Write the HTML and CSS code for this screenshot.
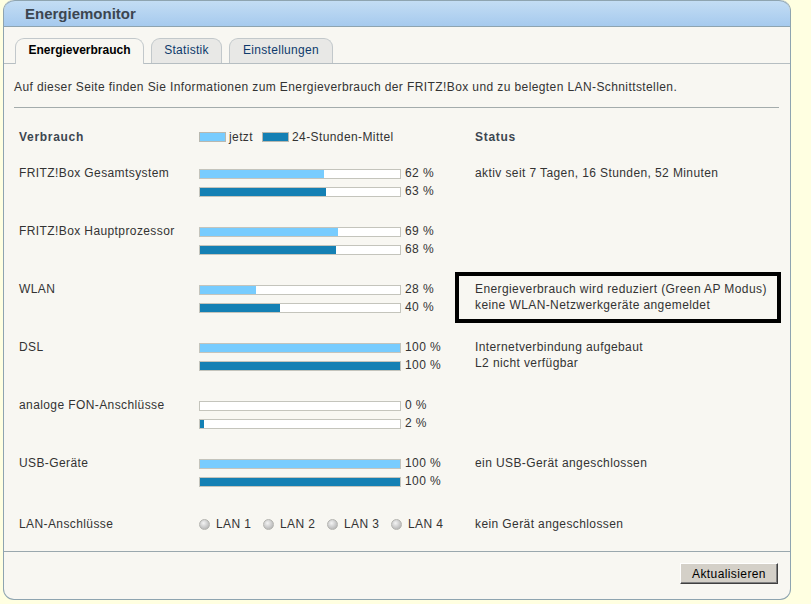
FILE: index.html
```html
<!DOCTYPE html>
<html lang="de">
<head>
<meta charset="utf-8">
<title>Energiemonitor</title>
<link rel="stylesheet" href="styles.css">
</head>
<body>
<div class="panel">
  <div class="head">Energiemonitor</div>
  <div class="tabs">
    <div class="tab t1 active">Energieverbrauch</div>
    <div class="tab t2">Statistik</div>
    <div class="tab t3">Einstellungen</div>
  </div>
  <div class="content">
    <p class="intro">Auf dieser Seite finden Sie Informationen zum Energieverbrauch der FRITZ!Box und zu belegten LAN-Schnittstellen.</p>
    <div class="rule"></div>
    <div class="table">
      <div class="row thead">
        <div class="label bold">Verbrauch</div>
        <div class="legend">
          <span class="swatch now"></span><span class="ltext">jetzt</span>
          <span class="swatch avg"></span><span class="ltext">24-Stunden-Mittel</span>
        </div>
        <div class="status bold">Status</div>
      </div>

      <div class="row">
        <div class="label">FRITZ!Box Gesamtsystem</div>
        <div class="bars">
          <div class="bline"><div class="bar"><div class="fill now" style="width:62%"></div></div><span class="pct">62 %</span></div>
          <div class="bline"><div class="bar"><div class="fill avg" style="width:63%"></div></div><span class="pct">63 %</span></div>
        </div>
        <div class="status">aktiv seit 7 Tagen, 16 Stunden, 52 Minuten</div>
      </div>

      <div class="row">
        <div class="label">FRITZ!Box Hauptprozessor</div>
        <div class="bars">
          <div class="bline"><div class="bar"><div class="fill now" style="width:69%"></div></div><span class="pct">69 %</span></div>
          <div class="bline"><div class="bar"><div class="fill avg" style="width:68%"></div></div><span class="pct">68 %</span></div>
        </div>
        <div class="status"></div>
      </div>

      <div class="row">
        <div class="label">WLAN</div>
        <div class="bars">
          <div class="bline"><div class="bar"><div class="fill now" style="width:28%"></div></div><span class="pct">28 %</span></div>
          <div class="bline"><div class="bar"><div class="fill avg" style="width:40%"></div></div><span class="pct">40 %</span></div>
        </div>
        <div class="status boxed">Energieverbrauch wird reduziert (Green AP Modus)<br>keine WLAN-Netzwerkgeräte angemeldet</div>
      </div>

      <div class="row">
        <div class="label">DSL</div>
        <div class="bars">
          <div class="bline"><div class="bar"><div class="fill now" style="width:100%"></div></div><span class="pct">100 %</span></div>
          <div class="bline"><div class="bar"><div class="fill avg" style="width:100%"></div></div><span class="pct">100 %</span></div>
        </div>
        <div class="status">Internetverbindung aufgebaut<br>L2 nicht verfügbar</div>
      </div>

      <div class="row">
        <div class="label">analoge FON-Anschlüsse</div>
        <div class="bars">
          <div class="bline"><div class="bar"><div class="fill now" style="width:0%"></div></div><span class="pct">0 %</span></div>
          <div class="bline"><div class="bar"><div class="fill avg" style="width:2%"></div></div><span class="pct">2 %</span></div>
        </div>
        <div class="status"></div>
      </div>

      <div class="row">
        <div class="label">USB-Geräte</div>
        <div class="bars">
          <div class="bline"><div class="bar"><div class="fill now" style="width:100%"></div></div><span class="pct">100 %</span></div>
          <div class="bline"><div class="bar"><div class="fill avg" style="width:100%"></div></div><span class="pct">100 %</span></div>
        </div>
        <div class="status">ein USB-Gerät angeschlossen</div>
      </div>

      <div class="row lanrow">
        <div class="label">LAN-Anschlüsse</div>
        <div class="lans">
          <span class="lan"><span class="led"></span>LAN 1</span>
          <span class="lan"><span class="led"></span>LAN 2</span>
          <span class="lan"><span class="led"></span>LAN 3</span>
          <span class="lan"><span class="led"></span>LAN 4</span>
        </div>
        <div class="status">kein Gerät angeschlossen</div>
      </div>
    </div>
  </div>
  <div class="foot">
    <button class="btn" type="button">Aktualisieren</button>
  </div>
</div>
</body>
</html>
```

FILE: styles.css
```css
html, body {
  margin: 0;
  padding: 0;
}
body {
  background: #ffffe1;
  font-family: "Liberation Sans", Arial, sans-serif;
  font-size: 12px;
  letter-spacing: 0.4px;
  color: #333;
  width: 811px;
  height: 604px;
  overflow: hidden;
}
.panel {
  margin-left: 3px;
  width: 788px;
  height: 600px;
  box-sizing: border-box;
  border: 1px solid #8ea4b0;
  border-top: none;
  border-radius: 11px;
  background: #f8f7f2;
  overflow: hidden;
  display: flex;
  flex-direction: column;
}
.head {
  height: 27px;
  box-sizing: border-box;
  border-top: 1px solid #8ea4b0;
  border-bottom: 1px solid #8ea4b0;
  border-radius: 11px 11px 0 0;
  background: linear-gradient(#c3ddf4, #a6caee);
  font-size: 15px;
  font-weight: bold;
  letter-spacing: 0;
  color: #3c4650;
  padding: 5px 0 0 21px;
  line-height: 16px;
}
.tabs {
  display: flex;
  gap: 7px;
  padding: 11px 0 0 11px;
  border-bottom: 1px solid #b6bec2;
  height: 25px;
}
.tab {
  height: 25px;
  box-sizing: border-box;
  line-height: 23px;
  text-align: center;
  border: 1px solid #c2c8cb;
  border-bottom: none;
  border-radius: 9px 9px 0 0;
  background: #e8e8e6;
  color: #0e3a6c;
  letter-spacing: 0.3px;
}
.t1 { width: 129px; }
.t2 { width: 71px; }
.t3 { width: 104px; }
.tab.active {
  background: #f8f7f2;
  color: #000;
  font-weight: bold;
  letter-spacing: 0;
  height: 26px;
  margin-bottom: -1px;
}
.content {
  padding: 0 10px;
}
.intro {
  margin: 15px 0 0 0;
  line-height: 16px;
}
.rule {
  margin-top: 12px;
  height: 1px;
  background: #a4acac;
  margin-right: 1px;
}
.table {
  margin-top: 21px;
  padding-left: 5px;
  display: flex;
  flex-direction: column;
  gap: 24px;
}
.row {
  display: grid;
  grid-template-columns: 180px 276px 1fr;
  align-items: start;
  line-height: 16px;
}
.thead {
  margin-bottom: -4px;
}
.bold {
  font-weight: bold;
  color: #3c4650;
  letter-spacing: 0.7px;
}
.legend {
  display: flex;
  align-items: center;
  height: 16px;
}
.swatch {
  width: 27px;
  height: 10px;
  box-sizing: border-box;
  border: 1px solid #b8b8b0;
}
.swatch.now { background: #78ccfe; }
.swatch.avg { background: #1480b4; }
.ltext {
  margin: 0 9px 0 3px;
}
.bars {
  display: flex;
  flex-direction: column;
  gap: 2px;
}
.bline {
  display: flex;
  align-items: center;
  height: 16px;
}
.bar {
  width: 202px;
  height: 10px;
  box-sizing: border-box;
  border: 1px solid #c4c4bc;
  background: #fff;
  margin-top: 1px;
}
.fill {
  height: 100%;
}
.fill.now { background: #78ccfe; }
.fill.avg { background: #1480b4; }
.pct {
  margin-left: 4px;
}
.status {
  position: relative;
}
.boxed::after {
  content: "";
  position: absolute;
  left: -20px;
  top: -9px;
  width: 326px;
  height: 51px;
  box-sizing: border-box;
  border: 4px solid #000;
}
.lanrow {
  margin-top: 3px;
}
.lans {
  display: flex;
  height: 16px;
  align-items: center;
}
.lan {
  display: flex;
  align-items: center;
  width: 64px;
}
.led {
  width: 11px;
  height: 11px;
  border-radius: 50%;
  box-sizing: border-box;
  border: 1px solid #b4b4b0;
  background: radial-gradient(circle at 40% 35%, #f4f4f4 0%, #d0d0d0 45%, #a8a8a8 100%);
  margin-right: 6px;
}
.foot {
  margin-top: 19px;
  border-top: 1px solid #9aa8ae;
  display: flex;
  justify-content: flex-end;
  padding: 11px 12px 0 0;
}
.btn {
  width: 98px;
  height: 21px;
  background: #d4d0c8;
  border: 1px solid;
  border-color: #fff #404040 #404040 #fff;
  box-shadow: inset -1px -1px 0 #808080;
  font-family: "Liberation Sans", Arial, sans-serif;
  font-size: 12px;
  letter-spacing: 0.4px;
  color: #000;
  padding: 0;
}
```
